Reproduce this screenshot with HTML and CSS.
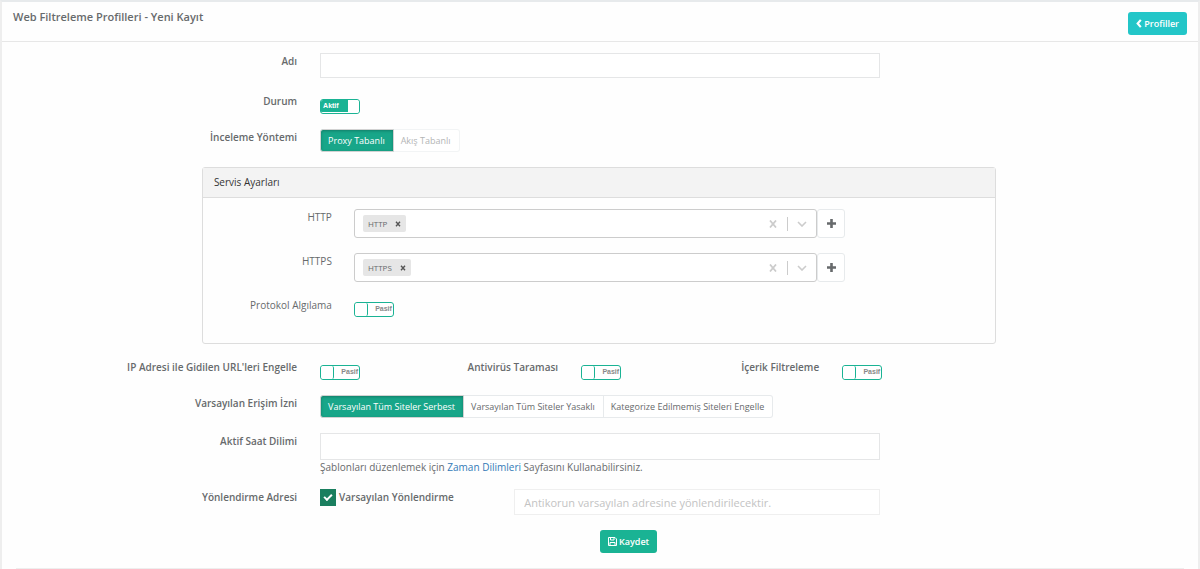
FILE: index.html
```html
<!DOCTYPE html>
<html lang="tr">
<head>
<meta charset="utf-8">
<title>Web Filtreleme Profilleri - Yeni Kayıt</title>
<link rel="stylesheet" href="styles.css">
</head>
<body>
<main class="panel">
  <header class="panel-header">
    <h1 class="title">Web Filtreleme Profilleri - Yeni Kayıt</h1>
    <button type="button" class="btn btn-info">
      <svg class="icon-back" viewBox="0 0 6 10" aria-hidden="true"><path d="M5 1 1.500 5 5 9" fill="none" stroke="currentColor" stroke-width="2.400"/></svg>
      Profiller
    </button>
  </header>

  <form class="form">
    <div class="row">
      <label class="label" for="name">Adı</label>
      <input class="input" id="name" type="text">
    </div>

    <div class="row">
      <label class="label" for="status">Durum</label>
      <span class="switch switch-on"><span>Aktif</span><input id="status" type="checkbox" role="switch" checked></span>
    </div>

    <div class="row">
      <span class="label" id="method">İnceleme Yöntemi</span>
      <div class="group" role="group" aria-labelledby="method">
        <button type="button" class="option option-active">Proxy Tabanlı</button>
        <button type="button" class="option" disabled>Akış Tabanlı</button>
      </div>
    </div>

    <section class="card">
      <h2 class="card-header">Servis Ayarları</h2>
      <div class="card-body">
        <div class="service">
          <label class="label label-light" for="http">HTTP</label>
          <div class="service-control">
            <div class="picker">
              <span class="tag">HTTP <button type="button" class="plain tag-remove" aria-label="HTTP kaldır"><svg viewBox="0 0 6 6"><path d="M1 .8 5 5.2M5 .8 1 5.2" stroke="currentColor" stroke-width="1.4"/></svg></button></span>
              <input class="picker-input" id="http" type="text">
              <button type="button" class="plain clear" aria-label="Temizle"><svg viewBox="0 0 8 8"><path d="M1 .5l6 7M7 .5 1 7.5" stroke="currentColor" stroke-width="1.8"/></svg></button>
              <button type="button" class="plain open" aria-label="Aç"><svg viewBox="0 0 10 6"><path d="M1 1l4 4 4-4" fill="none" stroke="currentColor" stroke-width="1.6"/></svg></button>
            </div>
            <button type="button" class="add" aria-label="HTTP ekle"><svg viewBox="0 0 9 9"><path d="M4.500 0v9M0 4.500h9" stroke="currentColor" stroke-width="2.600"/></svg></button>
          </div>
        </div>
        <div class="service">
          <label class="label label-light" for="https">HTTPS</label>
          <div class="service-control">
            <div class="picker">
              <span class="tag">HTTPS <button type="button" class="plain tag-remove" aria-label="HTTPS kaldır"><svg viewBox="0 0 6 6"><path d="M1 .8 5 5.2M5 .8 1 5.2" stroke="currentColor" stroke-width="1.4"/></svg></button></span>
              <input class="picker-input" id="https" type="text">
              <button type="button" class="plain clear" aria-label="Temizle"><svg viewBox="0 0 8 8"><path d="M1 .5l6 7M7 .5 1 7.5" stroke="currentColor" stroke-width="1.8"/></svg></button>
              <button type="button" class="plain open" aria-label="Aç"><svg viewBox="0 0 10 6"><path d="M1 1l4 4 4-4" fill="none" stroke="currentColor" stroke-width="1.6"/></svg></button>
            </div>
            <button type="button" class="add" aria-label="HTTPS ekle"><svg viewBox="0 0 9 9"><path d="M4.500 0v9M0 4.500h9" stroke="currentColor" stroke-width="2.600"/></svg></button>
          </div>
        </div>
        <div class="service">
          <label class="label label-light" for="detect">Protokol Algılama</label>
          <span class="switch"><input id="detect" type="checkbox" role="switch"><span>Pasif</span></span>
        </div>
      </div>
    </section>

    <div class="row row-switches">
      <label class="label" for="block-ip">IP Adresi ile Gidilen URL'leri Engelle</label>
      <span class="switch"><input id="block-ip" type="checkbox" role="switch"><span>Pasif</span></span>
      <label class="label" for="antivirus">Antivirüs Taraması</label>
      <span class="switch"><input id="antivirus" type="checkbox" role="switch"><span>Pasif</span></span>
      <label class="label" for="content">İçerik Filtreleme</label>
      <span class="switch"><input id="content" type="checkbox" role="switch"><span>Pasif</span></span>
    </div>

    <div class="row">
      <span class="label" id="access">Varsayılan Erişim İzni</span>
      <div class="group" role="group" aria-labelledby="access">
        <button type="button" class="option option-active">Varsayılan Tüm Siteler Serbest</button>
        <button type="button" class="option">Varsayılan Tüm Siteler Yasaklı</button>
        <button type="button" class="option">Kategorize Edilmemiş Siteleri Engelle</button>
      </div>
    </div>

    <div class="row">
      <label class="label" for="slot">Aktif Saat Dilimi</label>
      <div>
        <input class="input input-tall" id="slot" type="text">
        <p class="help">Şablonları düzenlemek için <a href="#">Zaman Dilimleri</a> Sayfasını Kullanabilirsiniz.</p>
      </div>
    </div>

    <div class="row">
      <label class="label" for="address">Yönlendirme Adresi</label>
      <div class="redirect">
        <label class="check"><input type="checkbox" checked>Varsayılan Yönlendirme</label>
        <input class="input" id="address" type="text" placeholder="Antikorun varsayılan adresine yönlendirilecektir." disabled>
      </div>
    </div>

    <button type="submit" class="btn btn-save">
      <svg class="icon-save" viewBox="0 0 9 9" aria-hidden="true"><path d="M.5.500h6.500L8.500 2v6.500h-8zM2.500.500v2.500h3.500V.500M2 8.500V5.500h5v3" fill="none" stroke="currentColor"/></svg>
      Kaydet
    </button>
    <hr class="rule">
  </form>
</main>
</body>
</html>
```
FILE: styles.css
```css
* { box-sizing: border-box; }
body {
  margin: 0;
  background: #fefefe;
  color: #676a6c;
  font: 10px/16px "Open Sans", sans-serif;
}
button, input { font: inherit; color: inherit; }
svg { display: block; }

.panel {
  min-height: 100vh;
  border: 2px solid #eeeeee;
  border-top-color: #e7eaec;
  border-bottom: 0;
}
.panel-header {
  display: flex;
  justify-content: space-between;
  align-items: flex-start;
  padding: 10px 11px 6px;
  border-bottom: 1px solid #e7e7e7;
}
.title { margin: -3px 0 0; font-size: 11px; line-height: 16px; font-weight: 600; }

.btn {
  display: flex;
  align-items: center;
  gap: 2px;
  height: 23px;
  padding: 0 8px;
  border: 0;
  border-radius: 3px;
  color: #fff;
  font-size: 9px;
  font-weight: 600;
}
.btn-info { background: #23c6c8; }
.btn-save { align-self: flex-start; margin-left: 50%; background: #1ab394; }
.icon-back { width: 6px; height: 9px; }
.icon-save { width: 9px; height: 9px; }

.form {
  display: flex;
  flex-direction: column;
  gap: 15px;
  padding: 11px 14px 0;
}
.row {
  display: grid;
  grid-template-columns: 24% 48%;
  column-gap: 23px;
  align-items: start;
  padding-left: 1px;
}
.row-switches { grid-template-columns: 24% 40px 15% 40px 15% 40px; }
.label { text-align: right; font-weight: 600; }
.label-light { font-weight: 400; }

.input {
  display: block;
  width: 100%;
  height: 25px;
  padding: 0 9px;
  border: 1px solid #e5e6e7;
  background: #fff;
  font-size: 11px;
}
.input-tall { height: 27px; }
.input:disabled { border-color: #efefef; }
.input::placeholder { color: #c3c3c3; }
.help { margin: 0; line-height: 14px; }
.help a { color: #337ab7; text-decoration: none; }

.switch {
  display: flex;
  align-items: stretch;
  width: 40px;
  height: 15px;
  margin-top: 5px;
  margin-bottom: 1px;
  border: 1px solid #1ab394;
  border-radius: 3px;
  overflow: hidden;
  background: #fff;
  color: #888;
  font: 700 7px/12px "Liberation Sans", sans-serif;
}
.row > .switch { margin-top: 6px; margin-bottom: 0; }
.switch span { flex: 1; text-align: right; padding-right: 1px; }
.switch input {
  appearance: none;
  width: 13px;
  margin: 0;
  border-right: 1px solid #1ab394;
  border-radius: 2px;
  background: #fff;
}
.switch-on { color: #fff; }
.switch-on span {
  height: 12px;
  padding-left: 2px;
  background: #1ab394;
  text-align: left;
}
.switch-on input { width: 11px; border: 0; }

.group { display: flex; }
.option {
  height: 23px;
  padding: 0 8px 0 7px;
  border: 1px solid #e7eaec;
  background: #fff;
  font-size: 9px;
  white-space: nowrap;
}
.option + .option { border-left: 0; }
.option:last-child { border-radius: 0 3px 3px 0; }
.option:disabled { color: #b3b5b6; border-color: #f2f4f5; }
.option-active {
  border-color: #d2d2d2;
  border-radius: 3px 0 0 3px;
  background: #18a689;
  box-shadow: inset 0 1px 3px rgba(0, 0, 0, 0.25);
  color: #fff;
  font-weight: 500;
}

.card {
  width: 68%;
  margin-left: calc(16% - 1px);
  border: 1px solid #dddddd;
  border-radius: 3px;
}
.card-header {
  margin: 0;
  padding: 6px 11px 7px;
  border-bottom: 1px solid #dddddd;
  background: #f3f3f3;
  color: #333;
  font-size: 10px;
  font-weight: 400;
}
.card-body {
  display: flex;
  flex-direction: column;
  gap: 15px;
  padding: 11px 0 25px;
}
.service {
  display: grid;
  grid-template-columns: 129px 62%;
  column-gap: 22px;
  align-items: start;
}
.service-control { display: flex; }
.picker {
  flex: 1;
  display: flex;
  align-items: center;
  height: 29px;
  padding-left: 8px;
  border: 1px solid #cccccc;
  border-radius: 3px;
  background: #fff;
}
.tag {
  display: flex;
  align-items: center;
  gap: 8px;
  height: 17px;
  padding: 0 5px;
  border-radius: 2px;
  background: #e6e6e6;
  font-size: 8px;
}
.picker-input { flex: 1; min-width: 0; border: 0; background: none; outline: 0; }
.plain { padding: 0; border: 0; background: none; }
.tag-remove { width: 6px; color: #555; }
.clear { padding: 3px 10px; border-right: 1px solid #cccccc; color: #cccccc; }
.clear svg { width: 8px; height: 8px; }
.open { padding: 0 9px; color: #cccccc; }
.open svg { width: 10px; height: 6px; }
.add {
  display: grid;
  place-items: center;
  width: 28px;
  height: 29px;
  padding: 0;
  border: 1px solid #e7eaec;
  border-radius: 3px;
  background: #fff;
}
.add svg { width: 9px; height: 9px; }

.redirect {
  display: grid;
  grid-template-columns: 1fr 366px;
  align-items: start;
}
.redirect .input { height: 26px; }
.check { display: flex; align-items: flex-start; gap: 3px; font-weight: 600; }
.check input {
  appearance: none;
  width: 16px;
  height: 17px;
  margin: 0;
  background: #1a7f5f;
  display: grid;
  place-items: center;
}
.check input:checked::before {
  content: "";
  box-sizing: border-box;
  width: 8px;
  height: 5px;
  margin-bottom: 2px;
  border: solid #fff;
  border-width: 0 0 2px 2px;
  transform: rotate(-45deg);
}
.rule { width: 100%; margin: 0; border: 0; border-top: 1px solid #eeeeee; }
```
